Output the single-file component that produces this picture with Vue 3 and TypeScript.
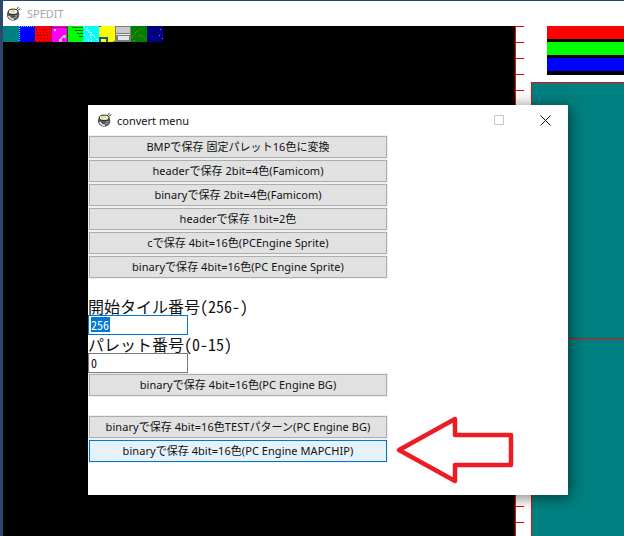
<script setup lang="ts">
const topButtons: string[] = [
  'BMPで保存 固定パレット16色に変換',
  'headerで保存 2bit=4色(Famicom)',
  'binaryで保存 2bit=4色(Famicom)',
  'headerで保存 1bit=2色',
  'cで保存 4bit=16色(PCEngine Sprite)',
  'binaryで保存 4bit=16色(PC Engine Sprite)',
]
const ticks: number[] = Array.from({ length: 32 }, (_, i) => i)
const swatches = ['teal', 'blue', 'red', 'magenta', 'green', 'cyan', 'yellow', 'grey', 'forest', 'navy']
</script>

<template>
  <div class="app">
    <header class="titlebar">
      <svg class="cup" viewBox="0 0 18 18" width="16" height="16">
        <path d="M14 1 L12 4 M16 3 L13 5" stroke="#222" fill="none" />
        <ellipse cx="8" cy="10" rx="7" ry="6.5" fill="#555" />
        <ellipse cx="8" cy="6.5" rx="5.5" ry="3" fill="#eee" stroke="#111" />
        <path d="M4 6.5 Q8 4 11 6 Q8 8 4 6.5Z" fill="#e8dc3c" />
        <path d="M3 11 Q5 15 9 15" stroke="#ddd" fill="none" stroke-width="2" />
        <path d="M10 11 h3 M9 13 h3" stroke="#aaa" />
      </svg>
      <span class="app-name">SPEDIT</span>
    </header>

    <main class="workspace">
      <section class="canvas">
        <div class="palette">
          <svg v-for="s in swatches" :key="s" class="swatch" viewBox="0 0 16 16" width="16" height="16" shape-rendering="crispEdges">
            <template v-if="s === 'teal'"><rect width="16" height="16" fill="#008080" /></template>
            <template v-else-if="s === 'blue'">
              <rect width="16" height="16" fill="#0000ff" />
              <path d="M0 .5h16M.5 0v16" stroke="#00ffff" stroke-dasharray="1 1" />
              <path d="M9 15h7M11 13h5M13 11h3" stroke="#000080" stroke-dasharray="1 1" />
            </template>
            <template v-else-if="s === 'red'">
              <rect width="16" height="16" fill="#ff0000" />
              <path d="M1 3h14M2 6h12M0 9h15M3 12h11M1 15h14" stroke="#800000" stroke-dasharray="1 2" />
            </template>
            <template v-else-if="s === 'magenta'">
              <rect width="16" height="16" fill="#ff00ff" />
              <path d="M.5 0v16M1 1.500h15" stroke="#800080" />
              <rect x="3" y="3" width="2" height="2" fill="#fff" />
              <path d="M8 16v-3l4-4h3v7z" fill="#c0c0c0" />
              <rect x="11" y="12" width="4" height="4" fill="#ff00ff" />
            </template>
            <template v-else-if="s === 'green'">
              <rect width="16" height="16" fill="#00ff00" />
              <path d="M.5 0v16M5 1.500h11M8 4.500h8M10 7.500h6M12 10.500h4" stroke="#006000" />
            </template>
            <template v-else-if="s === 'cyan'">
              <rect width="16" height="16" fill="#00ffff" />
              <path d="M1 1l6 7l2 8M4 1l8 11l4 3M1 8l5 7" stroke="#d8ffff" stroke-dasharray="2 1" fill="none" />
            </template>
            <template v-else-if="s === 'yellow'">
              <rect width="16" height="16" fill="#ffff00" />
              <path d="M0 .5h2" stroke="#008080" />
              <path d="M1 16v-4h7v4" fill="#ffff00" stroke="#006868" stroke-width="2" />
              <path d="M14 15.500h2" stroke="#808000" />
            </template>
            <template v-else-if="s === 'grey'">
              <rect width="16" height="16" fill="#7c7c7c" />
              <rect x="1" y="1" width="14" height="6" fill="#c8c8c8" />
              <rect x="3" y="10" width="11" height="4" fill="#e4e4e4" />
              <path d="M1 8.500h14" stroke="#eee" />
            </template>
            <template v-else-if="s === 'forest'">
              <rect width="16" height="16" fill="#008000" />
              <path d="M1 12l4-6l5-3M8 9l4 2l3 3M2 15l3-2" stroke="#8a7a10" stroke-dasharray="2 1" fill="none" />
            </template>
            <template v-else>
              <rect width="16" height="16" fill="#000080" />
              <path d="M13 3h1M12 9h1M15 12h1" stroke="#8080ff" />
            </template>
          </svg>
        </div>
      </section>

      <aside class="ruler">
        <i v-for="t in ticks" :key="t" class="tick"></i>
      </aside>

      <section class="side">
        <div class="stripes">
          <div class="stripe stripe-red"></div>
          <div class="stripe stripe-green"></div>
          <div class="stripe stripe-blue"></div>
        </div>
        <div class="teal">
          <div class="grid-line"></div>
        </div>
      </section>
    </main>

    <div class="window">
      <div class="win-title">
        <svg class="cup" viewBox="0 0 18 18" width="16" height="16">
          <path d="M14 1 L12 4 M16 3 L13 5" stroke="#222" fill="none" />
          <ellipse cx="8" cy="10" rx="7" ry="6.5" fill="#555" />
          <ellipse cx="8" cy="6.5" rx="5.500" ry="3" fill="#eee" stroke="#111" />
          <path d="M4 6.500 Q8 4 11 6 Q8 8 4 6.500Z" fill="#e8dc3c" />
          <path d="M3 11 Q5 15 9 15" stroke="#ddd" fill="none" stroke-width="2" />
          <path d="M10 11 h3 M9 13 h3" stroke="#aaa" />
        </svg>
        <span class="win-name">convert menu</span>
        <svg class="win-max" viewBox="0 0 10 10" width="10" height="10"><rect x=".5" y=".5" width="9" height="9" fill="none" stroke="#c8c8c8" /></svg>
        <svg class="win-close" viewBox="0 0 11 11" width="11" height="11"><path d="M.5 .5l10 10M10.500 .5l-10 10" stroke="#111" fill="none" /></svg>
      </div>

      <div class="win-body">
        <div class="btn-stack">
          <button v-for="label in topButtons" :key="label" class="btn" type="button">{{ label }}</button>
        </div>

        <label class="field-label first-label">開始タイル番号(256-)</label>
        <div class="input input-focus"><span class="selected">256</span></div>
        <label class="field-label">パレット番号(0-15)</label>
        <div class="input">0</div>
        <button class="btn solo" type="button">binaryで保存 4bit=16色(PC Engine BG)</button>

        <div class="btn-stack bottom-stack">
          <button class="btn" type="button">binaryで保存 4bit=16色TESTパターン(PC Engine BG)</button>
          <button class="btn btn-hover" type="button">binaryで保存 4bit=16色(PC Engine MAPCHIP)</button>
        </div>
      </div>

      <svg class="arrow" viewBox="0 0 120 70" width="120" height="70">
        <path d="M4 35 L60 4 V20 L116 20 V50 L60 50 V66 Z" fill="none" stroke="#ed1c24" stroke-width="4.500" stroke-linejoin="round" />
      </svg>
    </div>
  </div>
</template>

<style>
html, body { margin: 0; padding: 0; background: #fff; overflow: hidden; }
</style>

<style scoped>
.app {
  position: relative;
  width: 624px;
  height: 536px;
  overflow: hidden;
  box-sizing: border-box;
  border-top: 1px solid #2b4a6b;
  font-family: "Liberation Sans", "Noto Sans CJK JP", sans-serif;
  display: flex;
  flex-direction: column;
  background: #fff;
}
.titlebar {
  height: 25px;
  flex: none;
  display: flex;
  align-items: center;
  padding-left: 3px;
  background: #fff;
  border-left: 3px solid #2b4a6b;
  box-sizing: border-box;
}
.app-name {
  margin-left: 5px;
  font-family: "Noto Sans", "Liberation Sans", sans-serif;
  font-size: 11px;
  color: #a6a6a6;
}
.workspace {
  flex: 1;
  min-height: 0;
  display: flex;
  border-left: 3px solid #2b4a6b;
}
.canvas {
  width: 512px;
  flex: none;
  background: #000;
}
.palette { display: flex; height: 16px; }
.swatch { display: block; flex: none; }
.ruler {
  width: 16px;
  flex: none;
  box-sizing: border-box;
  border-left: 1px solid #f00;
  background: #fff;
  display: flex;
  flex-direction: column;
  gap: 15px;
  overflow: hidden;
}
.tick { display: block; height: 1px; width: 8px; flex: none; background: #f00; }
.side {
  flex: 1;
  display: flex;
  flex-direction: column;
  min-width: 0;
}
.stripes {
  height: 56px;
  flex: none;
  padding-left: 16px;
  box-sizing: border-box;
  display: flex;
  flex-direction: column;
}
.stripe { height: 13px; border-bottom: 3px solid #000; flex: none; }
.stripe-red { background: #f00; }
.stripe-green { background: #0f0; }
.stripe-blue { background: #00f; border-bottom-width: 4px; }
.teal {
  flex: 1;
  background: #008080;
  border-top: 1px solid #f00;
  border-left: 1px solid #f00;
}
.grid-line { height: 1px; margin-top: 255px; background: #f00; }

.window {
  position: absolute;
  left: 88px;
  top: 104px;
  width: 480px;
  height: 390px;
  background: #fff;
  box-shadow: 2px 2px 14px rgba(0, 0, 0, .55);
  display: flex;
  flex-direction: column;
}
.win-title {
  height: 30px;
  flex: none;
  display: flex;
  align-items: center;
  padding-left: 9px;
  box-sizing: border-box;
}
.win-name {
  margin-left: 4px;
  font-family: "Noto Sans", "Liberation Sans", sans-serif;
  font-size: 11px;
  color: #111;
}
.win-max { margin-left: auto; }
.win-close { margin-left: 36px; margin-right: 17px; }
.win-body {
  padding: 1px 0 0 1px;
  display: flex;
  flex-direction: column;
  align-items: flex-start;
}
.btn-stack { display: flex; flex-direction: column; gap: 2px; }
.btn {
  display: block;
  width: 298px;
  height: 22px;
  margin: 0;
  padding: 0;
  box-sizing: border-box;
  background: #e1e1e1;
  border: 1px solid #adadad;
  box-shadow: 0 0 0 1px #f0f0f0;
  font-family: "Noto Sans", "Noto Sans CJK JP", sans-serif;
  font-size: 11px;
  letter-spacing: .05px;
  line-height: 18px;
  color: #111;
  text-align: center;
  white-space: nowrap;
}
.btn-hover { background: #e5f1fb; border-color: #0078d7; }
.first-label { margin-top: 19px; }
.field-label {
  display: block;
  height: 18px;
  margin-left: -1px;
  font-family: "Noto Sans CJK JP", sans-serif;
  font-feature-settings: "hwid";
  font-size: 16px;
  line-height: 18px;
  color: #111;
  white-space: nowrap;
}
.input {
  width: 100px;
  height: 20px;
  margin-left: -1px;
  box-sizing: border-box;
  border: 1px solid #7a7a7a;
  padding: 1px 0 0 2px;
  font-family: "Noto Sans CJK JP", sans-serif;
  font-feature-settings: "hwid";
  font-size: 12px;
  line-height: 15px;
  color: #111;
  background: #fff;
}
.input-focus { border-color: #0078d7; }
.selected { background: #0078d7; color: #fff; display: inline-block; padding-right: 1px; }
.solo { margin-top: 1px; }
.bottom-stack { margin-top: 20px; }
.arrow {
  position: absolute;
  left: 307px;
  top: 310px;
}
</style>
